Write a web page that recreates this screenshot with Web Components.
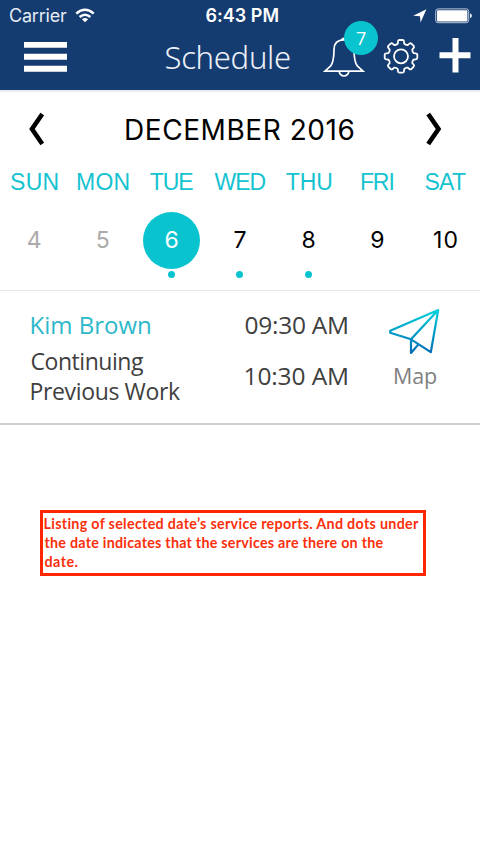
<!DOCTYPE html>
<html lang="en">
<head>
<meta charset="utf-8">
<title>Schedule</title>
<style>
body{margin:0;background:#fff;font-family:Inter,"Liberation Sans",sans-serif}
</style>
</head>
<body>
<schedule-app></schedule-app>
<script>
const define = (name, html, init) => customElements.define(name, class extends HTMLElement {
  connectedCallback() {
    if (this.shadowRoot) return;
    const t = document.createElement('template');
    t.innerHTML = html;
    this.attachShadow({mode:'open'}).append(t.content.cloneNode(true));
    if (init) init(this, this.shadowRoot);
  }
});

// One line of text whose glyphs span exactly `w` pixels, tracked by letter-spacing.
const ctx = document.createElement('canvas').getContext('2d');
define('fit-text', `<style>
  :host{display:block;white-space:pre;flex:none}
  span{display:inline-block}
</style><span><slot></slot></span>`, (el, root) => {
  const s = getComputedStyle(el), text = el.textContent, w = +el.getAttribute('w');
  const span = root.querySelector('span');
  ctx.font = `${s.fontWeight} ${s.fontSize} ${s.fontFamily}`;
  const m = ctx.measureText(text);
  const ink = m.actualBoundingBoxRight + m.actualBoundingBoxLeft;
  if (text.length > 1) span.style.letterSpacing = (w - ink) / (text.length - 1) + 'px';
  span.style.marginLeft = m.actualBoundingBoxLeft + 'px';
  el.style.width = (text.length > 1 ? w : ink) + 'px';
});

define('status-bar', `<style>
  :host{display:grid;grid-template-columns:1fr auto 1fr;height:32px;padding:0 8px 0 10px;color:#fff;font:400 18px/32px Inter,sans-serif;box-sizing:border-box}
  div{display:flex;align-items:center}
  .l{gap:8px;color:#e6ecf5}.r{justify-content:flex-end;gap:8px}
  .t{font-weight:600;padding-left:2px}
  svg{display:block}
</style>
<div class="l"><fit-text w="57">Carrier</fit-text>
<svg width="20" height="16" viewBox="0 0 20 16" fill="none" stroke="#fff" stroke-width="2.5"><path d="M1.3 5.6Q10-2 18.7 5.6M4.6 9Q10 4.4 15.4 9"/><path d="M6.9 11.3Q10 8.9 13.1 11.3L10 14.3Z" fill="#fff" stroke="none"/></svg></div>
<div class="t"><fit-text w="73">6:43 PM</fit-text></div>
<div class="r"><svg width="14" height="14" viewBox="0 0 14 14"><path d="M13.4.2L7.6 13.6 7 7.3.2 6.7Z" fill="#fff"/></svg>
<svg width="37" height="16" viewBox="0 0 37 16"><rect x=".7" y=".9" width="33" height="13.8" rx="2.4" fill="none" stroke="#bac7d9" stroke-width="1"/><rect x="2" y="2.2" width="30.4" height="11.2" rx="1" fill="#fff"/><path d="M35 5.3Q37 6 37 7.8T35 10.3Z" fill="#dce3ec"/></svg></div>`);

define('nav-bar', `<style>
  :host{display:grid;grid-template-columns:165.5px 125.5px 1fr;height:58px;align-items:start;color:#fff}
  svg{display:block}
  .menu{padding:10px 0 0 24px}
  .title{font:350 31px/51px "Noto Sans",sans-serif;color:#edf0f8}
  .icons{display:grid;grid-template-columns:42px 36px 34px;column-gap:18px;padding-left:32px}
  .bell{position:relative;padding-top:5px}
  .badge{position:absolute;left:21px;top:-11px;width:34px;height:34px;border-radius:50%;background:#09c3cf;display:flex;justify-content:center;font:400 18px/34px "Open Sans",sans-serif}
  .gear{padding-top:6px}.plus{padding:6px 0 0 1.5px}
</style>
<div class="menu"><svg width="43" height="30" viewBox="0 0 43 30" fill="#fff"><path d="M0 0h43v5.8H0zM0 11.8h43v6H0zM0 23.8h43v6H0z"/></svg></div>
<div class="title"><fit-text w="124.5">Schedule</fit-text></div>
<div class="icons">
 <div class="bell"><svg width="42" height="40" viewBox="0 0 42 40" fill="none" stroke="#fff" stroke-width="1.7"><path d="M18.8 4V2.6Q21 .4 23.2 2.6V4M21 2.8C14 2.8 11 6.6 11 12.5C11 21 9.8 26.5 7.5 29.2L1.8 34.2H40.2L34.5 29.2C32.2 26.5 31 21 31 12.5C31 6.6 28 2.8 21 2.8ZM16 34.2Q17 39 21 39T26 34.2"/></svg><div class="badge"><fit-text w="9">7</fit-text></div></div>
 <svg class="gear" width="36" height="36" viewBox="0 0 36 36" fill="none" stroke="#fff" stroke-width="1.8"><path class="teeth"/><circle cx="18" cy="18.3" r="7"/></svg>
 <svg class="plus" width="34" height="36" viewBox="0 0 34 36"><path d="M14 0h6v14.3h12v6H20V34.6h-6V20.3H1v-6h13z" fill="#fff"/></svg>
</div>`, (el, root) => {
  // Gear outline: eight rounded teeth around the hub.
  const p = (r, a) => `${(18 + r * Math.cos(a)).toFixed(2)} ${(18.3 + r * Math.sin(a)).toFixed(2)}`;
  let d = '';
  for (let i = 0; i < 8; i++) {
    const a = i * Math.PI / 4;
    d += `${i ? 'L' : 'M'}${p(13.1, a - .25)}L${p(15.2, a - .2)}Q${p(16.4, a - .18)} ${p(16.4, a - .1)}L${p(16.4, a + .1)}Q${p(16.4, a + .18)} ${p(15.2, a + .2)}L${p(13.1, a + .25)}Q${p(12, a + Math.PI / 8)} ${p(13.1, a + Math.PI / 4 - .25)}`;
  }
  root.querySelector('.teeth').setAttribute('d', d + 'Z');
});

define('month-header', `<style>
  :host{display:grid;grid-template-columns:98px 1fr 54px;align-items:center;height:74px;padding:0 0 0 28px;color:#000;box-sizing:border-box}
  .m{font:400 28px/40px Inter,sans-serif;padding-top:2px}
  svg{display:block;fill:none;stroke:#000;stroke-width:4.6}
</style>
<svg width="16" height="34" viewBox="0 0 16 34"><path d="M14.3 2L4 17 14.3 32"/></svg>
<div class="m"><fit-text w="227.5">DECEMBER 2016</fit-text></div>
<svg width="16" height="34" viewBox="0 0 16 34"><path d="M2.2 2L12.5 17 2.2 32"/></svg>`);

define('day-column', `<style>
  :host{display:flex;flex-direction:column;align-items:center;color:#000}
  .n{font:400 23px/32px "Liberation Sans",sans-serif;color:#15c3d0}
  .d{margin-top:13.5px;width:57px;height:57px;border-radius:50%;display:flex;justify-content:center;font:400 23px/56px Inter,sans-serif}
  :host([muted]) .d{color:#aaa}
  :host([selected]) .d{background:#09c3cf;color:#fff}
  .dot{margin-top:2px;width:7px;height:7px;border-radius:50%}
  :host([busy]) .dot{background:#09c3cf}
</style><div class="n"><slot name="name"></slot></div><div class="d"><slot></slot></div><div class="dot"></div>`);

define('week-grid', `<style>
  :host{display:grid;grid-template-columns:repeat(7,1fr);height:124px;border-bottom:1px solid #e6e6e6}
</style>
<day-column muted><fit-text slot="name" w="46.5">SUN</fit-text><fit-text w="12">4</fit-text></day-column>
<day-column muted><fit-text slot="name" w="51.5">MON</fit-text><fit-text w="12">5</fit-text></day-column>
<day-column selected busy><fit-text slot="name" w="43.5">TUE</fit-text><fit-text w="12">6</fit-text></day-column>
<day-column busy><fit-text slot="name" w="51">WED</fit-text><fit-text w="12">7</fit-text></day-column>
<day-column busy><fit-text slot="name" w="45.5">THU</fit-text><fit-text w="12">8</fit-text></day-column>
<day-column><fit-text slot="name" w="32.5">FRI</fit-text><fit-text w="12">9</fit-text></day-column>
<day-column><fit-text slot="name" w="40.5">SAT</fit-text><fit-text w="23.5">10</fit-text></day-column>`);

define('service-row', `<style>
  :host{display:grid;grid-template-columns:214px 144px 1fr;height:134px;padding-left:31.5px;box-sizing:border-box;border-bottom:2px solid #cfcfcf;color:#404040;font:400 23px/30px "Open Sans",sans-serif}
  .name{color:#2cb8ca;font:400 24px/36px "Open Sans",sans-serif;padding:16px 0 3px}
  .times{font:400 24.5px/51px "Open Sans",sans-serif;padding-top:8px}
  .map{padding:17px 0 0;color:#808080;font:400 21.5px/32px "Open Sans",sans-serif;margin-left:-.5px}
  .map fit-text{margin:5px 0 0 6px}
  svg{display:block}
</style>
<div><div class="name"><fit-text w="118.5">Kim Brown</fit-text></div><fit-text w="112.5">Continuing</fit-text><fit-text w="148.5">Previous Work</fit-text></div>
<div class="times"><fit-text w="101.5">09:30 AM</fit-text><fit-text w="101.5">10:30 AM</fit-text></div>
<div class="map"><svg width="51" height="47" viewBox="0 0 51 47" fill="none" stroke="url(#g)" stroke-width="2.2" stroke-linejoin="round"><defs><linearGradient id="g" gradientUnits="userSpaceOnUse" x1="0" y1="2" x2="0" y2="46"><stop stop-color="#00d2dc"/><stop offset="1" stop-color="#0069b4"/></linearGradient></defs><path d="M49.2 2L1.2 22.8V24.8L22 31.3 41.8 44.2Zm0 0L22 31.3V45L29.2 36.6"/></svg><fit-text w="41">Map</fit-text></div>`);

define('note-box', `<style>
  :host{display:block;margin:85px 0 0 40px;width:386px;height:66px;box-sizing:border-box;border:3px solid #ff2600;padding:1px 0 0 1.5px;color:#fb2f0c;font:700 14.3px/19px Lato,sans-serif}
</style><slot></slot>`);

define('schedule-app', `<style>
  :host{display:block;width:480px;height:852px;overflow:hidden;background:#fff}
  header{background:#153c70;height:90px;border-bottom:2px solid #ececec}
</style>
<header><status-bar></status-bar><nav-bar></nav-bar></header>
<month-header></month-header>
<week-grid></week-grid>
<service-row></service-row>
<note-box><fit-text w="375.5">Listing of selected date’s service reports. And dots under</fit-text><fit-text w="339">the date indicates that the services are there on the</fit-text><fit-text w="33">date.</fit-text></note-box>`);
</script>
</body>
</html>
